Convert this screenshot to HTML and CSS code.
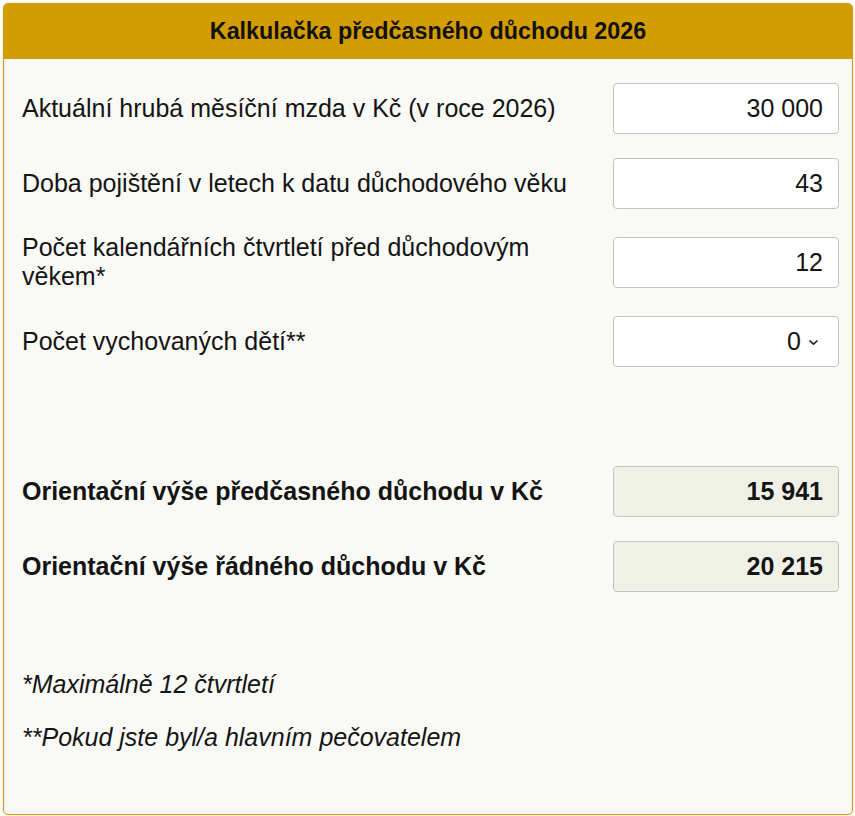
FILE: index.html
```html
<!DOCTYPE html>
<html lang="cs">
<head>
<meta charset="utf-8">
<link rel="stylesheet" href="styles.css">
<title>Kalkulačka předčasného důchodu 2026</title>
</head>
<body>
<div class="card">
  <div class="card-header">Kalkulačka předčasného důchodu 2026</div>
  <div class="card-body">
    <div class="row">
      <label class="label">Aktuální hrubá měsíční mzda v Kč (v roce 2026)</label>
      <div class="field">30 000</div>
    </div>
    <div class="row">
      <label class="label">Doba pojištění v letech k datu důchodového věku</label>
      <div class="field">43</div>
    </div>
    <div class="row row-tall">
      <label class="label">Počet kalendářních čtvrtletí před důchodovým věkem*</label>
      <div class="field">12</div>
    </div>
    <div class="row">
      <label class="label">Počet vychovaných dětí**</label>
      <div class="field select">0<svg class="chev" width="11" height="7" viewBox="0 0 11 7"><path d="M1.5 1.5 L5.5 5.2 L9.5 1.5" fill="none" stroke="#222" stroke-width="1.7"/></svg></div>
    </div>
    <div class="results">
      <div class="row">
        <div class="label strong">Orientační výše předčasného důchodu v Kč</div>
        <div class="field result">15 941</div>
      </div>
      <div class="row">
        <div class="label strong">Orientační výše řádného důchodu v Kč</div>
        <div class="field result">20 215</div>
      </div>
    </div>
    <div class="notes">
      <p class="note">*Maximálně 12 čtvrtletí</p>
      <p class="note">**Pokud jste byl/a hlavním pečovatelem</p>
    </div>
  </div>
</div>
</body>
</html>
```
FILE: styles.css
```css
html, body {
  margin: 0;
  padding: 0;
  background: #ffffff;
}
body {
  padding: 3px 2px 1px 3px;
  font-family: "Liberation Sans", Arial, sans-serif;
  color: #141414;
}
.card {
  border: 1px solid #d39c00;
  border-radius: 5px;
  background: #f9f9f5;
  height: 812px;
  box-sizing: border-box;
  overflow: hidden;
  box-shadow: 0 0 3px rgba(0,0,0,0.15);
}
.card-header {
  background: #d39c00;
  height: 55px;
  display: flex;
  align-items: center;
  justify-content: center;
  font-weight: bold;
  font-size: 23.3px;
  color: #111;
}
.card-body {
  padding: 24px 13px 0 18px;
}
.row {
  display: flex;
  align-items: center;
  justify-content: space-between;
  gap: 20px;
  margin-bottom: 24px;
}
.row-tall { margin-bottom: 25px; }
.label {
  font-size: 25px;
  line-height: 29px;
  flex: 1;
}
.strong { font-weight: bold; }
.field {
  width: 226px;
  height: 51px;
  box-sizing: border-box;
  border: 1px solid #c4c4c4;
  border-radius: 4px;
  background: #fff;
  display: flex;
  align-items: center;
  justify-content: flex-end;
  padding-right: 15px;
  font-size: 25px;
  flex: none;
}
.select { padding-right: 19px; gap: 7px; }
.chev { margin-top: 2px; }
.result {
  background: #f0f1e6;
  font-weight: bold;
}
.results { margin-top: 99px; }
.notes { margin-top: 77px; }
.note {
  margin: 0 0 23px 0;
  font-style: italic;
  font-size: 25px;
  line-height: 30px;
}
```
